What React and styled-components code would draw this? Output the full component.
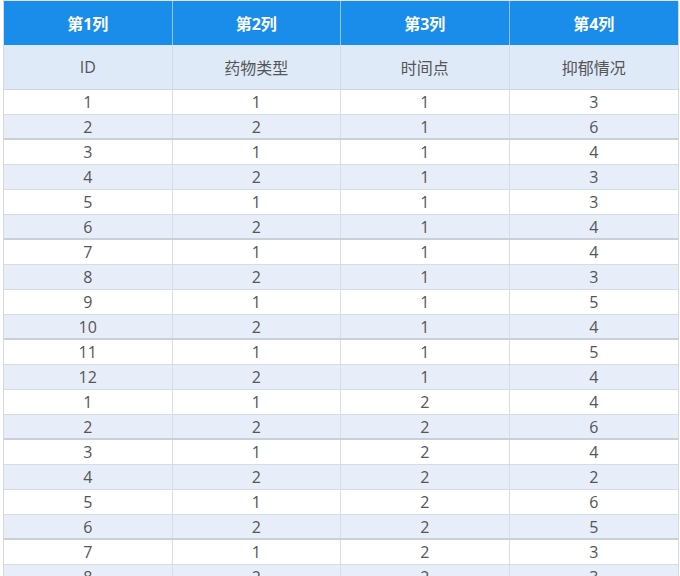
import React from "react";
import styled, { createGlobalStyle } from "styled-components";

const Global = createGlobalStyle`
  html, body { margin: 0; padding: 0; background: #fff; overflow: hidden; }
  body { font-family: "Open Sans", "Noto Sans CJK SC", sans-serif; }
`;

const Table = styled.div`
  box-sizing: border-box;
  margin-left: 3px;
  width: 676px;
  height: 576px;
  overflow: hidden;
  border-left: 1px solid #d3d9e0;
  border-right: 1px solid #d3d9e0;
  border-top: 1px solid #dfe5ec;
`;

const Row = styled.div`
  display: grid;
  grid-template-columns: repeat(4, 1fr);
  box-sizing: border-box;
  height: ${(p) => p.$h}px;
  background: ${(p) => p.$bg};
  border-bottom: ${(p) => p.$bb};
`;

const Cell = styled.div`
  display: flex;
  align-items: center;
  justify-content: center;
  box-sizing: border-box;
  border-right: 1px solid ${(p) => p.$line};
  color: ${(p) => p.$color};
  font-size: ${(p) => p.$size || 16}px;
  font-weight: ${(p) => (p.$bold ? 700 : 400)};
  font-family: "Open Sans", "Noto Sans CJK SC", sans-serif;
  &:last-child { border-right: none; }
`;

const data = [
  [1, 1, 1, 3], [2, 2, 1, 6], [3, 1, 1, 4], [4, 2, 1, 3], [5, 1, 1, 3],
  [6, 2, 1, 4], [7, 1, 1, 4], [8, 2, 1, 3], [9, 1, 1, 5], [10, 2, 1, 4],
  [11, 1, 1, 5], [12, 2, 1, 4], [1, 1, 2, 4], [2, 2, 2, 6], [3, 1, 2, 4],
  [4, 2, 2, 2], [5, 1, 2, 6], [6, 2, 2, 5], [7, 1, 2, 3], [8, 2, 2, 3],
  [9, 1, 2, 4], [10, 2, 2, 5],
];

export default function App() {
  return (
    <>
      <Global />
      <Table>
        <Row $h={44} $bg="#1a8ce9" $bb="none">
          {["第1列", "第2列", "第3列", "第4列"].map((t) => (
            <Cell key={t} $line="#8cc6f3" $color="#fff" $size={16} $bold>{t}</Cell>
          ))}
        </Row>
        <Row $h={45} $bg="#dfeaf9" $bb="1px solid #cfd6df">
          {["ID", "药物类型", "时间点", "抑郁情况"].map((t) => (
            <Cell key={t} $line="#d3dae3" $color="#555">{t}</Cell>
          ))}
        </Row>
        {data.map((r, i) => (
          <Row
            key={i}
            $h={25}
            $bg={i % 2 ? "#e7eef9" : "#fff"}
            $bb={i % 4 === 1 ? "2px solid #c9d0d8" : "1px solid #d6dce3"}
          >
            {r.map((v, j) => (
              <Cell key={j} $line="#d9dee4" $color="#555">{v}</Cell>
            ))}
          </Row>
        ))}
      </Table>
    </>
  );
}
